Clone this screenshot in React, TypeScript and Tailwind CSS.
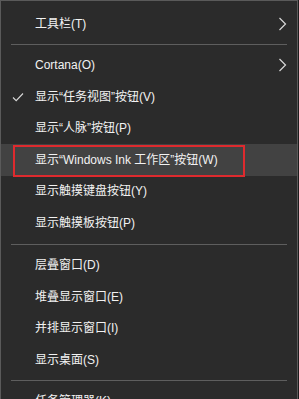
import React from "react";

const font = { fontFamily: '"Liberation Sans", "Noto Sans CJK SC", sans-serif' };

function Chevron() {
  return (
    <svg width="9" height="14" viewBox="0 0 9 14" className="absolute right-[10px] top-1/2 -translate-y-1/2">
      <path d="M1.5 1 L7.5 7 L1.5 13" fill="none" stroke="#d8d8d8" strokeWidth="1.2" />
    </svg>
  );
}

function Check() {
  return (
    <svg width="12" height="10" viewBox="0 0 12 10" className="absolute left-[11px] top-1/2 -translate-y-1/2">
      <path d="M1 5.5 L4.2 8.7 L11 1.5" fill="none" stroke="#d8d8d8" strokeWidth="1.1" />
    </svg>
  );
}

function Item({ label, chevron, check, active }: { label: string; chevron?: boolean; check?: boolean; active?: boolean }) {
  return (
    <div className={`relative flex h-[31.5px] items-center pl-[34px] text-[12px] text-[#f2f2f2] ${active ? "bg-[#424242]" : ""}`}>
      {check && <Check />}
      <span className="leading-none">{label}</span>
      {chevron && <Chevron />}
    </div>
  );
}

function Sep({ h = "h-[10px]" }: { h?: string }) {
  return (
    <div className={`flex ${h} items-center px-[10px]`}>
      <div className="h-px w-full bg-[#5e5e5e]" />
    </div>
  );
}

export default function App() {
  return (
    <div className="h-[399px] w-[299px] overflow-hidden bg-[#1c1c1c]" style={font}>
      <div className="relative h-[430px] w-[298px] border-l border-r border-t border-[#5a5a5a] bg-[#2b2b2b] pt-[7px]">
        <Item label="工具栏(T)" chevron />
        <Sep />
        <Item label="Cortana(O)" chevron />
        <Item label="显示“任务视图”按钮(V)" check />
        <Item label="显示“人脉”按钮(P)" />
        <Item label="显示“Windows Ink 工作区”按钮(W)" active />
        <Item label="显示触摸键盘按钮(Y)" />
        <Item label="显示触摸板按钮(P)" />
        <Sep h="h-[11px]" />
        <Item label="层叠窗口(D)" />
        <Item label="堆叠显示窗口(E)" />
        <Item label="并排显示窗口(I)" />
        <Item label="显示桌面(S)" />
        <Sep />
        <Item label="任务管理器(K)" />
        <div className="pointer-events-none absolute left-[12px] top-[144px] h-[32px] w-[232px] border-2 border-[#de2a2e]" />
      </div>
    </div>
  );
}
